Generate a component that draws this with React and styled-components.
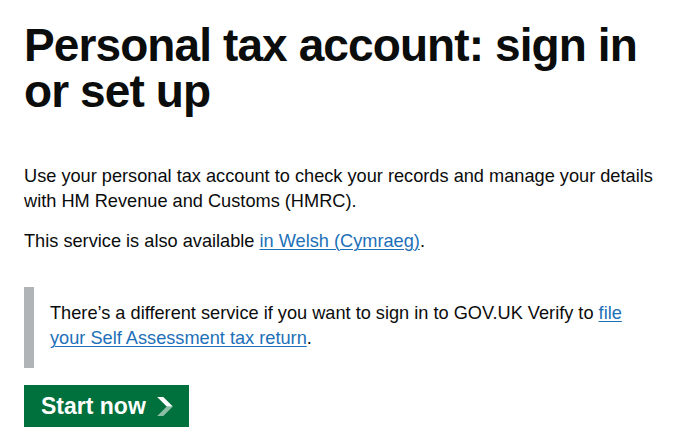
import React from "react";
import styled, { createGlobalStyle } from "styled-components";

const GlobalStyle = createGlobalStyle`
  html, body {
    margin: 0;
    padding: 0;
    background: #ffffff;
  }
  body {
    font-family: "Liberation Sans", Arial, sans-serif;
    color: #0b0c0c;
    -webkit-font-smoothing: antialiased;
  }
`;

const Main = styled.main`
  padding: 22px 24px 0;
`;

const Heading = styled.h1`
  margin: 0 0 50px;
  font-size: 46px;
  line-height: 46px;
  letter-spacing: -0.9px;
  font-weight: 700;
  color: #0b0c0c;
`;

const Body = styled.p`
  margin: 0 0 ${(p) => p.$gap || 15}px;
  font-size: 18.2px;
  line-height: 25px;
  color: #0b0c0c;
`;

const Link = styled.a`
  color: #1d70b8;
  text-decoration: underline;
  text-decoration-thickness: 1px;
  text-underline-offset: 2px;
`;

const Inset = styled.div`
  border-left: 10px solid #b1b4b6;
  padding: 14px 16px 17px;
  margin-bottom: 17px;
`;

const InsetText = styled.p`
  margin: 0;
  font-size: 18.2px;
  line-height: 25px;
  color: #0b0c0c;
`;

const StartButton = styled.a`
  display: inline-flex;
  align-items: center;
  gap: 11px;
  height: 42px;
  box-sizing: border-box;
  padding: 0 16px 0 17px;
  background: #00703c;
  box-shadow: 0 2px 0 #002d18;
  color: #ffffff;
  font-size: 23px;
  font-weight: 700;
  text-decoration: none;
  cursor: pointer;
`;

const Chevron = () => (
  <svg width="16" height="19" viewBox="0 0 33 40" aria-hidden="true">
    <path d="M0 0h13l20 20H20z" fill="#ffffff" />
    <path d="M20 20h13L13 40H0z" fill="#ffffff" fillOpacity="0.55" />
  </svg>
);

export default function App() {
  return (
    <>
      <GlobalStyle />
      <Main>
        <Heading>Personal tax account: sign in or set up</Heading>
        <Body>
          Use your personal tax account to check your records and manage your
          details with HM Revenue and Customs (HMRC).
        </Body>
        <Body $gap={33}>
          This service is also available <Link href="#">in Welsh (Cymraeg)</Link>.
        </Body>
        <Inset>
          <InsetText>
            There’s a different service if you want to sign in to GOV.UK Verify
            to <Link href="#">file your Self Assessment tax return</Link>.
          </InsetText>
        </Inset>
        <StartButton href="#" role="button">
          Start now
          <Chevron />
        </StartButton>
      </Main>
    </>
  );
}
